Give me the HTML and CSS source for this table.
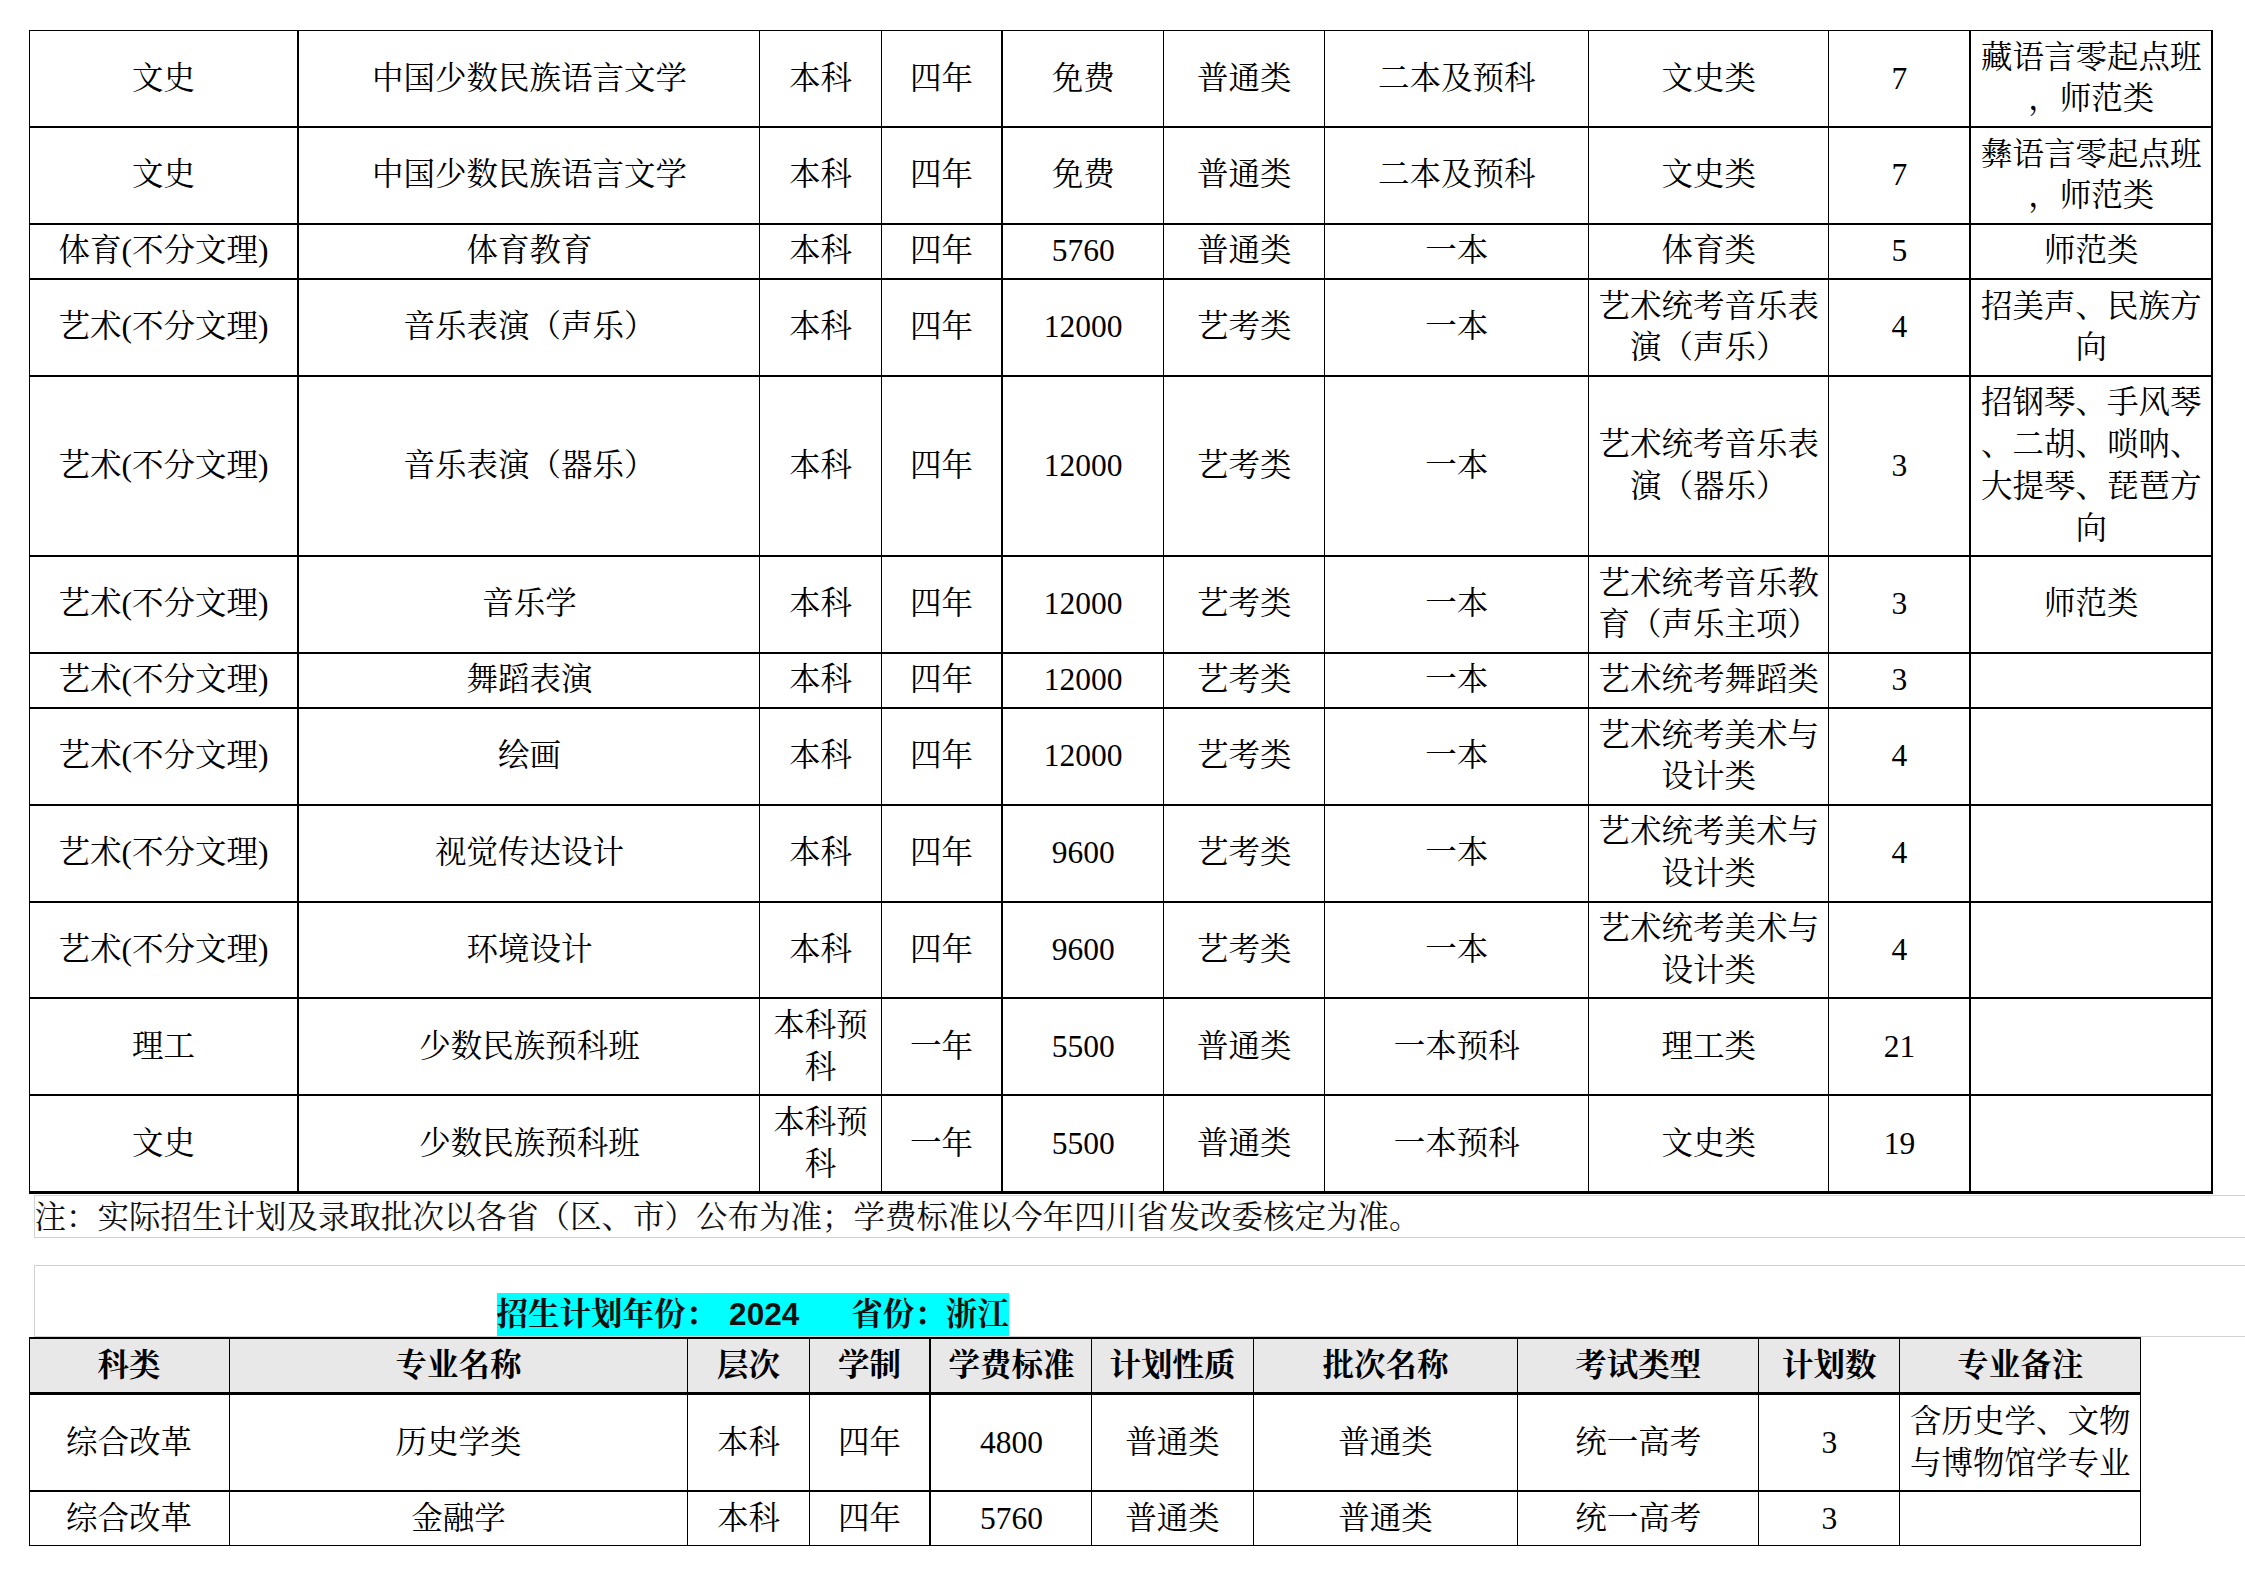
FILE: index.html
```html
<!DOCTYPE html>
<html lang="zh-CN">
<head>
<meta charset="utf-8">
<title>招生计划</title>
<link rel="stylesheet" href="styles.css">
</head>
<body>
<div class="page">
  <table class="grid t1">
    <colgroup>
      <col style="width:269.4px"><col style="width:461.5px"><col style="width:121.1px"><col style="width:121.4px"><col style="width:161px"><col style="width:161.5px"><col style="width:263.5px"><col style="width:240.4px"><col style="width:141.6px"><col style="width:241.5px">
    </colgroup>
    <tbody>
      <tr><td>文史</td><td>中国少数民族语言文学</td><td>本科</td><td>四年</td><td>免费</td><td>普通类</td><td>二本及预科</td><td>文史类</td><td>7</td><td>藏语言零起点班，师范类</td></tr>
      <tr><td>文史</td><td>中国少数民族语言文学</td><td>本科</td><td>四年</td><td>免费</td><td>普通类</td><td>二本及预科</td><td>文史类</td><td>7</td><td>彝语言零起点班，师范类</td></tr>
      <tr><td>体育(不分文理)</td><td>体育教育</td><td>本科</td><td>四年</td><td>5760</td><td>普通类</td><td>一本</td><td>体育类</td><td>5</td><td>师范类</td></tr>
      <tr><td>艺术(不分文理)</td><td>音乐表演（声乐）</td><td>本科</td><td>四年</td><td>12000</td><td>艺考类</td><td>一本</td><td>艺术统考音乐表演（声乐）</td><td>4</td><td>招美声、民族方向</td></tr>
      <tr><td>艺术(不分文理)</td><td>音乐表演（器乐）</td><td>本科</td><td>四年</td><td>12000</td><td>艺考类</td><td>一本</td><td>艺术统考音乐表演（器乐）</td><td>3</td><td>招钢琴、手风琴、二胡、唢呐、大提琴、琵琶方向</td></tr>
      <tr><td>艺术(不分文理)</td><td>音乐学</td><td>本科</td><td>四年</td><td>12000</td><td>艺考类</td><td>一本</td><td>艺术统考音乐教育（声乐主项）</td><td>3</td><td>师范类</td></tr>
      <tr><td>艺术(不分文理)</td><td>舞蹈表演</td><td>本科</td><td>四年</td><td>12000</td><td>艺考类</td><td>一本</td><td>艺术统考舞蹈类</td><td>3</td><td></td></tr>
      <tr><td>艺术(不分文理)</td><td>绘画</td><td>本科</td><td>四年</td><td>12000</td><td>艺考类</td><td>一本</td><td>艺术统考美术与设计类</td><td>4</td><td></td></tr>
      <tr><td>艺术(不分文理)</td><td>视觉传达设计</td><td>本科</td><td>四年</td><td>9600</td><td>艺考类</td><td>一本</td><td>艺术统考美术与设计类</td><td>4</td><td></td></tr>
      <tr><td>艺术(不分文理)</td><td>环境设计</td><td>本科</td><td>四年</td><td>9600</td><td>艺考类</td><td>一本</td><td>艺术统考美术与设计类</td><td>4</td><td></td></tr>
      <tr><td>理工</td><td>少数民族预科班</td><td>本科预科</td><td>一年</td><td>5500</td><td>普通类</td><td>一本预科</td><td>理工类</td><td>21</td><td></td></tr>
      <tr><td>文史</td><td>少数民族预科班</td><td>本科预科</td><td>一年</td><td>5500</td><td>普通类</td><td>一本预科</td><td>文史类</td><td>19</td><td></td></tr>
    </tbody>
  </table>

  <div class="note">注：实际招生计划及录取批次以各省（区、市）公布为准；学费标准以今年四川省发改委核定为准。</div>

  <div class="title-row">
    <span class="title">招生计划年份：<span class="year">2024</span>省份：浙江</span>
  </div>

  <table class="grid t2">
    <colgroup>
      <col style="width:200px"><col style="width:458.6px"><col style="width:121.5px"><col style="width:121.3px"><col style="width:161.3px"><col style="width:161.3px"><col style="width:264.7px"><col style="width:241.1px"><col style="width:140.8px"><col style="width:241.1px">
    </colgroup>
    <thead>
      <tr><th>科类</th><th>专业名称</th><th>层次</th><th>学制</th><th>学费标准</th><th>计划性质</th><th>批次名称</th><th>考试类型</th><th>计划数</th><th>专业备注</th></tr>
    </thead>
    <tbody>
      <tr><td>综合改革</td><td>历史学类</td><td>本科</td><td>四年</td><td>4800</td><td>普通类</td><td>普通类</td><td>统一高考</td><td>3</td><td>含历史学、文物与博物馆学专业</td></tr>
      <tr><td>综合改革</td><td>金融学</td><td>本科</td><td>四年</td><td>5760</td><td>普通类</td><td>普通类</td><td>统一高考</td><td>3</td><td></td></tr>
    </tbody>
  </table>
</div>
</body>
</html>
```

FILE: styles.css
```css
html, body {
  margin: 0;
  padding: 0;
  background: #ffffff;
  overflow: hidden;
}

body {
  font-family: "Liberation Serif", "Noto Serif CJK SC", "Source Han Serif SC", "AR PL UMing CN", "SimSun", "Noto Sans CJK SC", serif;
  font-size: 31.5px;
  color: #000;
}

.page {
  padding: 30px 0 0 28.6px;
}

.grid {
  border-collapse: collapse;
  table-layout: fixed;
}

.t1 { width: 2182.9px; }
.t2 { width: 2111.7px; }

.grid td,
.grid th {
  border-left: 1px solid #000;
  border-right: 1px solid #000;
  border-top: 2px solid #000;
  border-bottom: 2px solid #000;
  padding: 5.72px 4px;
  line-height: 41.7px;
  text-align: center;
  vertical-align: middle;
  line-break: anywhere;
  font-weight: normal;
}

/* table 1 borders */
.t1 tr:first-child td { border-top-width: 1px; }
.t1 tr:last-child td { border-top-width: 1px; border-bottom-width: 3px; }
.t1 td:nth-child(2),
.t1 td:nth-child(5),
.t1 td:nth-child(10) { border-left-width: 2px; }
.t1 td:last-child { border-right-width: 2px; }

/* table 2 */
.t2 th {
  background: #e8e8e8;
  font-weight: bold;
  border-bottom-width: 3px;
}
.t2 th:nth-child(5),
.t2 td:nth-child(5) { border-left-width: 2px; }
.t2 tbody tr:last-child td { border-bottom-width: 1px; }

.note {
  margin: 1px 0 0 5px;
  border: 1.5px solid #d2d2d2;
  border-right: none;
  height: 41px;
  line-height: 43px;
  padding-left: 0;
  white-space: nowrap;
  color: #111;
}

.title-row {
  margin: 27px 0 0 5px;
  height: 70px;
  border: 1.5px solid #d2d2d2;
  border-right: none;
  display: flex;
  align-items: flex-end;
  padding-left: 462px;
}

.title {
  background: #00ffff;
  font-weight: bold;
  line-height: 43px;
  height: 43px;
  display: inline-block;
  white-space: nowrap;
  color: #111;
}

.year {
  font-family: "Liberation Sans", "Noto Sans CJK SC", sans-serif;
  font-weight: bold;
  margin: 0 52px 0 12px;
}
```
